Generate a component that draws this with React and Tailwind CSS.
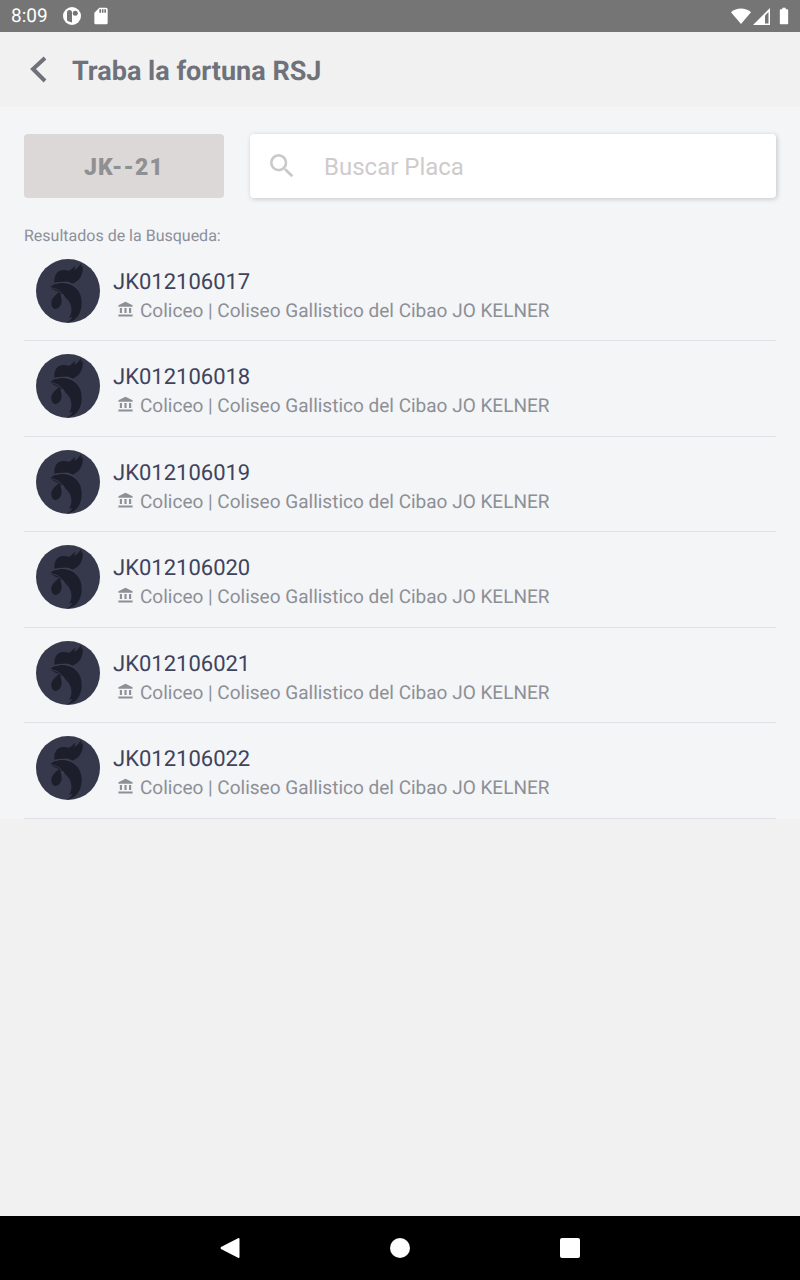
import React from 'react'
import { MdSearch, MdAccountBalance, MdSdCard, MdBatteryFull } from 'react-icons/md'

const results = [
  { plate: 'JK012106017' },
  { plate: 'JK012106018' },
  { plate: 'JK012106019' },
  { plate: 'JK012106020' },
  { plate: 'JK012106021' },
  { plate: 'JK012106022' },
]

const place = 'Coliceo | Coliseo Gallistico del Cibao JO KELNER'

function StatusBar() {
  return (
    <div className="flex h-8 items-center justify-between bg-[#757575] pl-[11px] pr-[10px] text-white">
      <div className="flex items-center">
        <span className="text-[19px] leading-8">8:09</span>
        <svg viewBox="0 0 18 18" className="ml-[15px] size-[18px]">
          <circle cx="9" cy="9" r="9" fill="#fff" />
          <path d="M4 5.500a2.500 2.500 0 0 1 5 0v10a13 13 0 0 1-5-2z" fill="#757575" />
          <circle cx="12.300" cy="6.300" r="2.500" fill="#757575" />
        </svg>
        <MdSdCard className="ml-[10px] size-5" />
      </div>
      <div className="flex items-center">
        <svg viewBox="0 0 20 16" className="h-4 w-5" fill="#fff">
          <path d="M10 16 0 4.200C2.800 1.800 6.200.5 10 .5s7.200 1.300 10 3.700z" />
        </svg>
        <svg viewBox="0 0 17 17" className="ml-[2px] size-[17px]">
          <path d="M17 0v17H0z" fill="#fff" />
          <path d="M15.500 4v11.500H12V7.500z" fill="#757575" />
        </svg>
        <MdBatteryFull className="ml-1 -mr-1 size-5" />
      </div>
    </div>
  )
}

function RoosterAvatar() {
  return (
    <svg viewBox="7 3 192 192" className="size-16 shrink-0">
      <circle cx="103" cy="99" r="96" fill="#36394c" />
      <g fill="#1c1f2b">
        <path d="M62 74c0-10 0-18 5-26 5-8 13-12 22-12 8 0 15 4 20 1 6-4 10-10 16-14-1 5-3 9-2 12 8-3 13-12 20-20 0 5 0 9-1 13l5-5c2 13-1 27-8 37-6 9-14 13-24 17-6-5-13-7-22-6-10 0-21 1-31 3z" />
        <path d="M49 87c8-5 15-10 26-11 20-3 41 3 54 17 12 13 16 30 15 47-1 18-8 33-19 43-7 6-15 9-24 10 8-5 13-10 15-17-3 2-6 3-10 4 6-9 8-18 7-29-1-12-5-20-13-28-5-5-9-9-10-15-3 1-6 2-9 1-4-6-9-9-15-11-5-2-13-6-17-11z" />
        <path d="M77 103c-10 6-23 17-24 30-1 12 5 20 12 20 11 0 18-11 19-23 0-10-2-19-7-27z" />
      </g>
      <path d="M49 87c10 6 21 5 28 12 7 6 10 15 10 26M64 77c22-7 48-6 66 14" fill="none" stroke="#434659" strokeWidth="2" />
    </svg>
  )
}

function ResultRow({ item }) {
  return (
    <li className="flex h-[95px] gap-[13px] border-b border-[#e0e1e4] pl-3 pt-[13px] even:h-24">
      <RoosterAvatar />
      <div className="min-w-0 pt-[10px]">
        <div className="text-[22px] leading-7 text-[#40435c]">{item.plate}</div>
        <div className="flex items-center gap-[6px] pl-1 text-[19px] leading-7 text-[#8d8f96]">
          <MdAccountBalance className="mb-1 size-[17px] shrink-0" />
          <span className="truncate">{place}</span>
        </div>
      </div>
    </li>
  )
}

export default function App() {
  return (
    <div className="flex min-h-screen flex-col bg-[#f1f1f1] font-[Roboto,sans-serif] [text-rendering:geometricPrecision]">
      <StatusBar />

      <header className="flex h-[75px] items-center pl-[29px]">
        <button type="button" aria-label="Volver" className="text-[#6f717b]">
          <svg viewBox="0 0 18 28" className="h-7 w-[18px]" fill="none" stroke="currentColor" strokeWidth="4">
            <path d="M16 2 4 13l12 12" />
          </svg>
        </button>
        <h1 className="ml-[25px] pt-[2px] text-[27px] font-bold leading-8 text-[#6f717b]">Traba la fortuna RSJ</h1>
      </header>

      <main className="bg-[#f3f5f7] px-6 pt-[27px]">
        <div className="flex gap-[26px]">
          <button type="button" className="h-16 w-[200px] shrink-0 rounded bg-[#ddd8d8] pt-1 text-[23px] font-black tracking-wider text-[#8f9092]">
            JK--21
          </button>
          <label className="flex h-16 min-w-0 flex-1 items-center rounded bg-white pl-4 shadow-[1px_1px_5px_rgba(0,0,0,0.2)]">
            <MdSearch className="size-8 shrink-0 text-[#cbc8c9]" />
            <input
              type="text"
              aria-label="Buscar Placa"
              placeholder="Buscar Placa"
              className="ml-[26px] min-w-0 flex-1 bg-transparent pt-[2px] text-2xl text-[#40435c] outline-none placeholder:text-[#cfcbcc]"
            />
          </label>
        </div>

        <h2 className="pt-[27px] text-base leading-[21px] text-[#8d8f99]">Resultados de la Busqueda:</h2>
        <ul>
          {results.map((item) => (
            <ResultRow key={item.plate} item={item} />
          ))}
        </ul>
      </main>

      <nav className="mt-auto flex h-16 items-center justify-center gap-[150px] bg-black">
        <button type="button" aria-label="Atrás">
          <svg viewBox="0 0 20 22" className="h-[22px] w-5" fill="#fff">
            <path d="M18 1.200Q19.500.5 19.500 2v18q0 1.500-1.500.8L1 12q-1-1 0-2z" />
          </svg>
        </button>
        <button type="button" aria-label="Inicio" className="size-5 rounded-full bg-white" />
        <button type="button" aria-label="Recientes" className="size-5 rounded-xs bg-white" />
      </nav>
    </div>
  )
}
